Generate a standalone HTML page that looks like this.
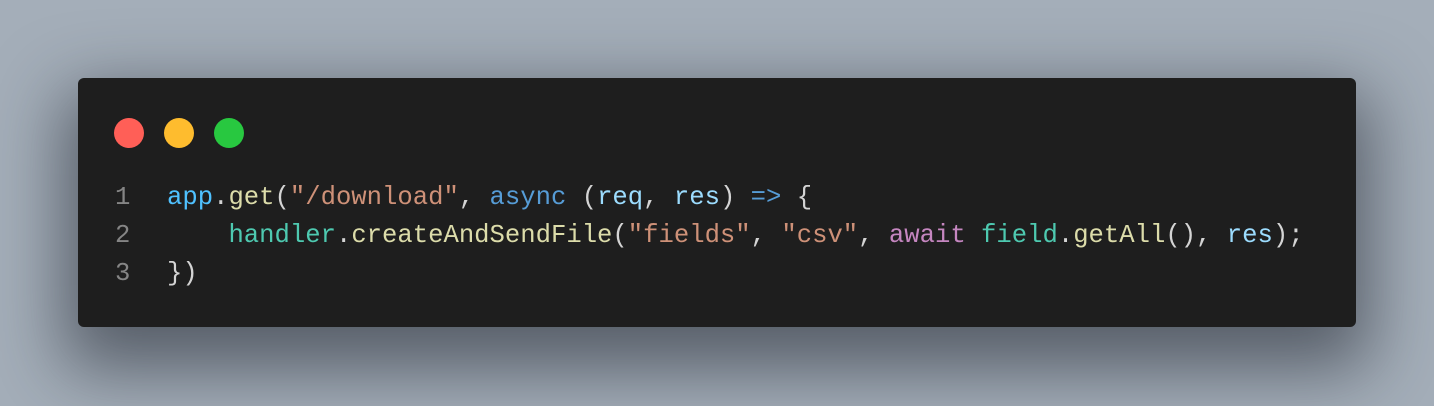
<!DOCTYPE html>
<html><head><style>
html,body{margin:0;padding:0;}
body{width:1434px;height:406px;background:#a4aeb9;position:relative;overflow:hidden;}
.win{position:absolute;left:78px;top:78px;width:1278px;height:249px;background:#1e1e1e;border-radius:6px;box-shadow:0 28px 70px 14px rgba(35,40,50,0.6);}
.dot{position:absolute;top:40px;width:30px;height:30px;border-radius:50%;}
.code{position:absolute;left:0;top:101px;font-family:"Liberation Mono",monospace;font-size:25.6px;line-height:38px;white-space:pre;color:#d4d4d4;}
.ln{position:absolute;left:37px;width:20px;color:#858585;}
.tx{position:absolute;left:89px;}
.v{color:#4fc1ff}.f{color:#dcdcaa}.s{color:#ce9178}.k{color:#569cd6}.p{color:#9cdcfe}.c{color:#4ec9b0}.a{color:#c586c0}
</style></head><body>
<div class="win">
<div class="dot" style="left:36px;background:#ff5f57"></div>
<div class="dot" style="left:86px;background:#febc2e"></div>
<div class="dot" style="left:136px;background:#28c840"></div>
<div class="code">
<div class="ln" style="top:0">1</div><div class="tx" style="top:0"><span class="v">app</span>.<span class="f">get</span>(<span class="s">"/download"</span>, <span class="k">async</span> (<span class="p">req</span>, <span class="p">res</span>) <span class="k">=&gt;</span> {</div>
<div class="ln" style="top:38px">2</div><div class="tx" style="top:38px">    <span class="c">handler</span>.<span class="f">createAndSendFile</span>(<span class="s">"fields"</span>, <span class="s">"csv"</span>, <span class="a">await</span> <span class="c">field</span>.<span class="f">getAll</span>(), <span class="p">res</span>);</div>
<div class="ln" style="top:76px">3</div><div class="tx" style="top:76px">})</div>
</div>
</div>
</body></html>
